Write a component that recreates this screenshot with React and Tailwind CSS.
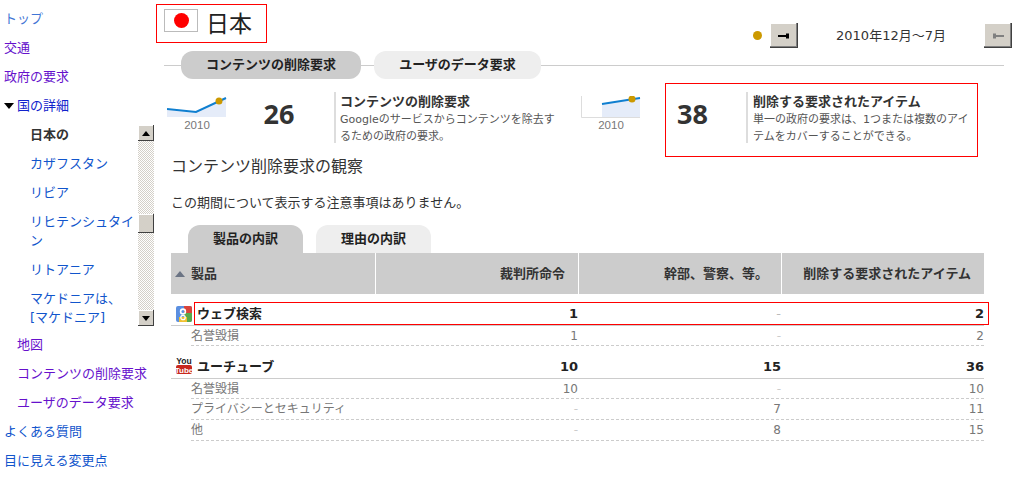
import React from "react";

const blue = "text-[#1155cc]";
const purple = "text-[#6611cc]";

function NavItem({ children, color, indent = "pl-[4px]" }) {
  return <div className={`h-[29px] leading-[29px] ${indent} ${color}`}>{children}</div>;
}

function ScrollButton({ up }) {
  return (
    <div className="w-4 h-4 flex items-center justify-center bg-[#d4d0c8] shadow-[inset_-1px_-1px_#404040,inset_1px_1px_#ffffff]">
      <svg width="8" height="5" viewBox="0 0 8 5">
        <path d={up ? "M4 0L8 5H0Z" : "M0 0H8L4 5Z"} fill="#000" />
      </svg>
    </div>
  );
}

function Sidebar() {
  return (
    <div className="w-[156px] shrink-0 pt-[4px] text-[13px]">
      <NavItem color={blue + " opacity-80"}>トップ</NavItem>
      <NavItem color={purple}>交通</NavItem>
      <NavItem color={purple}>政府の要求</NavItem>
      <div className={`h-[29px] leading-[29px] pl-[4px] flex items-center text-[#1122cc]`}>
        <svg width="10" height="6" viewBox="0 0 10 6" className="mr-[3px]">
          <path d="M0 0H10L5 6Z" fill="#000" />
        </svg>
        国の詳細
      </div>
      <div className="flex h-[210px]">
        <div className="w-[138px] pl-[30px] pr-[2px] overflow-hidden">
          <div className="h-[29px] leading-[29px] font-bold text-[#333]">日本の</div>
          <div className={`h-[29px] leading-[29px] ${blue}`}>カザフスタン</div>
          <div className={`h-[29px] leading-[29px] ${blue}`}>リビア</div>
          <div className={`py-[5px] leading-[19px] ${blue}`}>リヒテンシュタイ<br />ン</div>
          <div className={`h-[29px] leading-[29px] ${blue}`}>リトアニア</div>
          <div className={`py-[5px] leading-[19px] ${blue}`}>マケドニアは、<br />[マケドニア]</div>
        </div>
        <div className="mt-[5px] w-4 h-[201px] flex flex-col">
          <ScrollButton up />
          <div className="flex-1 bg-[repeating-conic-gradient(#d4d0c8_0_25%,#ffffff_0_50%)] bg-[length:2px_2px]">
            <div className="mt-[73px] h-[19px] w-4 bg-[#d4d0c8] shadow-[inset_-1px_-1px_#404040,inset_1px_1px_#ffffff]" />
          </div>
          <ScrollButton />
        </div>
      </div>
      <NavItem color={purple} indent="pl-[17px]">地図</NavItem>
      <NavItem color={purple} indent="pl-[17px]">コンテンツの削除要求</NavItem>
      <NavItem color={purple} indent="pl-[17px]">ユーザのデータ要求</NavItem>
      <NavItem color={blue}>よくある質問</NavItem>
      <NavItem color={blue}>目に見える変更点</NavItem>
    </div>
  );
}

function NavBtn({ active }) {
  const c = active ? "#000" : "#808080";
  return (
    <div className="w-[28px] h-[25px] flex items-center justify-center bg-[#d4d0c8] shadow-[inset_-1px_-1px_#404040,inset_-2px_-2px_#808080,inset_1px_1px_#ffffff]">
      <svg width="12" height="6" viewBox="0 0 12 6">
        {active ? <path d="M0 2H8V0.5H11V5.5H8V4H0Z" fill={c} /> : <path d="M1 0.5H4V2H12V4H4V5.5H1Z" fill={c} />}
      </svg>
    </div>
  );
}

function Header() {
  return (
    <div className="flex items-start justify-between h-[51px] pr-[5px]">
      <div className="mt-[4px] w-[111px] h-[39px] border border-[#ff0000] flex items-start pl-[7px] pt-[4px]">
        <div className="w-[34px] h-[23px] border border-[#bbbbbb] flex items-center justify-center">
          <div className="w-[15px] h-[15px] rounded-full bg-[#ff0000]" />
        </div>
        <div className="ml-[8px] text-[23px] leading-[30px] text-[#222]">日本</div>
      </div>
      <div className="mt-[23px] flex items-center">
        <div className="w-[9px] h-[9px] rounded-full bg-[#cc9900] mr-[8px]" />
        <NavBtn active />
        <div className="w-[186px] text-center text-[13px] text-[#333]">2010年12月～7月</div>
        <NavBtn />
      </div>
    </div>
  );
}

function PillTabs() {
  return (
    <div className="flex items-center h-[28px] pl-[8px] pr-[13px] text-[13px] font-bold text-[#222]">
      <div className="w-[17px] h-px bg-[#cccccc]" />
      <div className="w-[180px] h-full rounded-[12px] bg-[#cccccc] flex items-center justify-center">コンテンツの削除要求</div>
      <div className="w-[13px] h-px bg-[#cccccc]" />
      <div className="w-[167px] h-full rounded-[12px] bg-[#eeeeee] flex items-center justify-center">ユーザのデータ要求</div>
      <div className="flex-1 h-px bg-[#cccccc]" />
    </div>
  );
}

function Spark({ second }) {
  return (
    <div className="w-[60px] shrink-0 pt-[13px]">
      <svg width="60" height="22" viewBox="0 0 60 22" className="block">
        {second ? (
          <>
            <path d="M21 8L59 2V21H21Z" fill="#e5ecf9" />
            <path d="M0.5 0V21.5H59" fill="none" stroke="#dddddd" />
            <path d="M21 8L59 2" stroke="#0f7fd0" strokeWidth="2" fill="none" />
            <circle cx="51" cy="3" r="3.5" fill="#cc9900" />
          </>
        ) : (
          <>
            <path d="M0 13L29 16L59 2V21H0Z" fill="#e5ecf9" />
            <path d="M0 13L29 16L59 2" stroke="#0f7fd0" strokeWidth="2" fill="none" />
            <circle cx="52" cy="5" r="3.5" fill="#cc9900" />
          </>
        )}
      </svg>
      <div className="text-center text-[11.5px] leading-[14px] text-[#777] [font-family:'Liberation_Sans',sans-serif]">2010</div>
    </div>
  );
}

function StatsRow() {
  return (
    <div className="flex items-start mt-[4px] h-[74px] pl-[11px]">
      <Spark />
      <div className="w-[107px] shrink-0 pt-[15px] pr-[3px] text-center text-[27px] leading-[32px] font-bold text-[#333] [font-family:'Open_Sans',sans-serif]">26</div>
      <div className="mt-[9px] flex h-[51px] w-[247px] shrink-0 border-l-2 border-[#dddddd] pl-[4px]">
        <div>
          <div className="text-[13px] leading-[18px] pt-[1px] font-bold text-[#333]">コンテンツの削除要求</div>
          <div className="text-[11px] leading-[17px] text-[#555] w-[220px]">Googleのサービスからコンテンツを除去するための政府の要求。</div>
        </div>
      </div>
      <Spark second />
      <div className="ml-[24px] w-[313px] h-[74px] border border-[#ff0000] flex items-start pl-[11px]">
        <div className="w-[69px] shrink-0 pt-[14px] text-[27px] leading-[32px] font-bold text-[#333] [font-family:'Open_Sans',sans-serif]">38</div>
        <div className="mt-[8px] h-[51px] border-l-2 border-[#dddddd] pl-[5px]">
          <div className="text-[13px] leading-[18px] pt-[1px] font-bold text-[#333]">削除する要求されたアイテム</div>
          <div className="text-[11px] leading-[17px] text-[#555] w-[222px]">単一の政府の要求は、1つまたは複数のアイテムをカバーすることができる。</div>
        </div>
      </div>
    </div>
  );
}

function GoogleIcon() {
  return (
    <svg width="16" height="16" viewBox="0 0 16 16" className="shrink-0">
      <rect width="16" height="16" rx="2" fill="#5b8fe0" />
      <path d="M8 0H14A2 2 0 0 1 16 2V7H8Z" fill="#d9443a" />
      <path d="M8 7H16V14A2 2 0 0 1 14 16H8Z" fill="#5aa84a" />
      <path d="M3 11H11V16H3Z" fill="#f0c030" />
      <circle cx="7" cy="5.5" r="2.4" fill="none" stroke="#ffffff" strokeWidth="1.6" />
      <circle cx="7" cy="11.5" r="2.2" fill="none" stroke="#ffffff" strokeWidth="1.3" />
    </svg>
  );
}

function YouTubeIcon() {
  return (
    <svg width="16" height="17" viewBox="0 0 16 17" className="shrink-0 -mt-[2px]">
      <text x="8" y="7" textAnchor="middle" fontSize="8.5" fontWeight="700" fill="#222" fontFamily="Liberation Sans">You</text>
      <rect x="0" y="8" width="16" height="9" rx="2" fill="#c8281e" />
      <text x="8" y="15.5" textAnchor="middle" fontSize="8" fontWeight="700" fill="#fff" fontFamily="Liberation Sans">Tube</text>
    </svg>
  );
}

const cols = "grid grid-cols-[204px_203px_203px_203px]";
const subCols = "grid grid-cols-[184px_203px_203px_203px]";

function HeadCell({ children, last }) {
  return (
    <div className={`h-[41px] flex items-center justify-end pr-[13px] ${last ? "" : "border-r-[1px] border-[#ffffff]"}`}>{children}</div>
  );
}

function MainRow({ icon, name, vals, boxed }) {
  return (
    <div className={`relative ${cols} border-b border-[#cccccc] text-[13px] font-bold text-[#222]`}>
      {boxed && <div className="absolute left-[23px] top-0 w-[795px] h-[23px] border border-[#ff0000] pointer-events-none" />}
      <div className="flex items-center h-[23px] pl-[5px] gap-[5px]">{icon}<span>{name}</span></div>
      {vals.map((v, i) => (
        <div key={i} className={`h-[23px] leading-[23px] text-right ${v === "-" ? "font-normal text-[#bbbbbb]" : ""}`}>{v}</div>
      ))}
    </div>
  );
}

function SubRow({ name, vals, h = "h-[20px]" }) {
  return (
    <div className="pl-[20px]">
      <div className={`${subCols} ${h} items-center border-b border-dashed border-[#cccccc] text-[12px] text-[#777]`}>
        <div>{name}</div>
        {vals.map((v, i) => (
          <div key={i} className={`text-right ${v === "-" ? "text-[#cccccc]" : ""}`}>{v}</div>
        ))}
      </div>
    </div>
  );
}

function Table() {
  return (
    <div className="ml-[15px] w-[813px]">
      <div className="grid grid-cols-[205px_203px_203px_202px] bg-[#cccccc] text-[13px] font-bold text-[#333]">
        <div className="h-[41px] flex items-center pl-[4px] gap-[6px] border-r border-[#ffffff]">
          <svg width="10" height="6" viewBox="0 0 10 6"><path d="M5 0L10 6H0Z" fill="#6b7484" /></svg>
          <span>製品</span>
        </div>
        <HeadCell>裁判所命令</HeadCell>
        <HeadCell>幹部、警察、等。</HeadCell>
        <HeadCell last>削除する要求されたアイテム</HeadCell>
      </div>
      <div className="mt-[8px]">
        <MainRow boxed icon={<GoogleIcon />} name="ウェブ検索" vals={["1", "-", "2"]} />
        <SubRow name="名誉毀損" vals={["1", "-", "2"]} />
      </div>
      <div className="mt-[9px]">
        <MainRow icon={<YouTubeIcon />} name="ユーチューブ" vals={["10", "15", "36"]} />
        <SubRow name="名誉毀損" vals={["10", "-", "10"]} />
        <SubRow h="h-[21px]" name="プライバシーとセキュリティ" vals={["-", "7", "11"]} />
        <SubRow h="h-[21px]" name="他" vals={["-", "8", "15"]} />
      </div>
    </div>
  );
}

export default function App() {
  return (
    <div className="flex w-[1017px] h-[477px] overflow-hidden bg-white [font-family:'DejaVu_Sans','Noto_Sans_CJK_JP',sans-serif]">
      <Sidebar />
      <div className="flex-1 min-w-0">
        <Header />
        <PillTabs />
        <StatsRow />
        <div className="ml-[15px] mt-[-1px] text-[16px] leading-[22px] text-[#333]">コンテンツ削除要求の観察</div>
        <div className="ml-[15px] mt-[15px] text-[13px] leading-[20px] text-[#333]">この期間について表示する注意事項はありません。</div>
        <div className="flex ml-[32px] mt-[12px] gap-[13px] text-[13px] font-bold text-[#222]">
          <div className="w-[115px] h-[28px] rounded-t-[12px] bg-[#cccccc] flex items-center justify-center">製品の内訳</div>
          <div className="w-[115px] h-[28px] rounded-t-[12px] bg-[#eeeeee] flex items-center justify-center">理由の内訳</div>
        </div>
        <Table />
      </div>
    </div>
  );
}
